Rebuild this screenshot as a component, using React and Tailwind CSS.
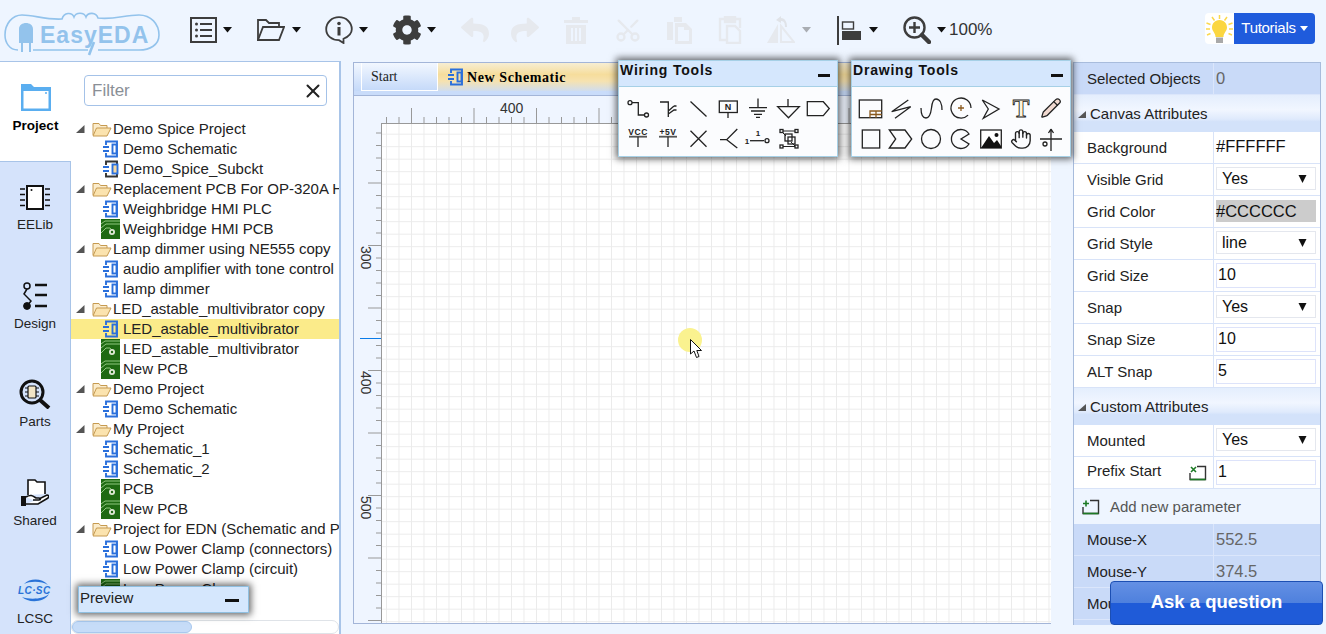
import { Scissors, Pencil, Hand, X } from "lucide-react";
import { FaCog, FaReply, FaShare } from "react-icons/fa";

const Caret = ({ light }) => (
  <svg width="9" height="6" viewBox="0 0 9 6" className="shrink-0">
    <path d="M0 0H9L4.5 5.5Z" fill={light ? "#a9adb3" : "#111"} />
  </svg>
);

const Logo = () => (
  <svg width="157" height="44" viewBox="0 0 157 44" className="shrink-0">
    <path
      d="M14 38C5 38 1 30 1 23C1 12 8 3 18 3C30 3 42 8 58 7C60 0 68 0 70 5C72 0 80 0 82 5C84 0 92 0 94 6C110 8 120 3 135 3C147 3 155 12 155 23C155 33 146 38 135 38H94M29 38H84"
      fill="none"
      stroke="#93c3ec"
      strokeWidth="1.6"
    />
    <path d="M15 31V17C15 9 29 9 29 17V31H27V40H25V31H19V40H17V31Z" fill="#93c3ec" />
    <text x="36" y="31" fontFamily="Liberation Sans" fontWeight="700" fontSize="23" fill="#93c3ec" letterSpacing="1">EasyEDA</text>
    <path d="M90 30L85 43" stroke="#93c3ec" strokeWidth="2.6" />
  </svg>
);

const ListIcon = () => (
  <svg width="27" height="26" viewBox="0 0 27 26">
    <rect x="1" y="1" width="25" height="24" fill="none" stroke="#3d3d3d" strokeWidth="2" />
    <g fill="#3d3d3d">
      <circle cx="6.5" cy="7" r="1.5" /><circle cx="6.5" cy="13" r="1.5" /><circle cx="6.5" cy="19" r="1.5" />
      <rect x="10" y="6" width="12" height="2" /><rect x="10" y="12" width="12" height="2" /><rect x="10" y="18" width="12" height="2" />
    </g>
  </svg>
);

const FolderIcon = () => (
  <svg width="28" height="24" viewBox="0 0 28 24" fill="none" stroke="#3d3d3d" strokeWidth="1.8">
    <path d="M1 22V2H9L12 5H22V9" />
    <path d="M1 22L6 9H27L22 22Z" />
  </svg>
);

const InfoIcon = () => (
  <svg width="28" height="28" viewBox="0 0 28 28" fill="none">
    <path d="M14 1.2C6.8 1.2 1.2 6.6 1.2 13.2C1.2 19.8 6.8 24 14 24.2L18.5 27V22.8C23.5 20.6 26.8 17.6 26.8 13.2C26.8 6.6 21.2 1.2 14 1.2Z" stroke="#3d3d3d" strokeWidth="1.8" />
    <rect x="12.5" y="11" width="3" height="8.5" fill="#3d3d3d" />
    <circle cx="14" cy="7.5" r="1.8" fill="#3d3d3d" />
  </svg>
);

const TrashIcon = () => (
  <svg width="24" height="27" viewBox="0 0 24 27" fill="#e6e9ee">
    <path d="M8 0H16V3H24V6H0V3H8ZM2 8H22V27H2ZM7 11V24H9V11ZM11 11V24H13V11ZM15 11V24H17V11Z" fillRule="evenodd" />
  </svg>
);

const CopyIcon = () => (
  <svg width="27" height="27" viewBox="0 0 27 27" fill="#e6e9ee">
    <path d="M8 0H16V5H8ZM1 5H7V23H1Z" />
    <path d="M9 6H20L26 12V27H9ZM12 10V24H23V13H18V10Z" fillRule="evenodd" />
  </svg>
);

const PasteIcon = () => (
  <svg width="24" height="28" viewBox="0 0 24 28" fill="none" stroke="#e6e9ee" strokeWidth="2.4">
    <path d="M6 3H2V24H8M18 3H22V12" />
    <rect x="7" y="1" width="10" height="5" fill="#e6e9ee" />
    <path d="M9 10H17L22 15V27H9Z" />
  </svg>
);

const FlipIcon = () => (
  <svg width="28" height="28" viewBox="0 0 28 28">
    <path d="M0 27L11 8V27Z" fill="#e6e9ee" />
    <path d="M14 10L27 26H14Z" fill="none" stroke="#e6e9ee" strokeWidth="2" />
    <path d="M14 0L9 4L14 7V5C17 5 18 7 18 11H20C20 6 18 2 14 2Z" fill="#e0e3e8" />
  </svg>
);

const AlignIcon = () => (
  <svg width="24" height="29" viewBox="0 0 24 29">
    <rect x="0" y="0" width="2" height="29" fill="#3d3d3d" />
    <rect x="5.5" y="6" width="11" height="7" fill="none" stroke="#3d3d3d" strokeWidth="1.4" />
    <rect x="5" y="15" width="19" height="9" fill="#3d3d3d" />
  </svg>
);

const ZoomIcon = () => (
  <svg width="28" height="28" viewBox="0 0 28 28" fill="none" stroke="#3d3d3d">
    <circle cx="11.5" cy="11.5" r="10" strokeWidth="2.4" />
    <path d="M11.5 6V17M6 11.5H17" strokeWidth="2.4" />
    <path d="M19 19L26 26" strokeWidth="4.5" strokeLinecap="round" />
  </svg>
);

const BulbIcon = () => (
  <svg width="27" height="28" viewBox="0 0 27 28">
    <g stroke="#fbd84e" strokeWidth="1.5">
      <path d="M13.5 0V4M6 2L8.5 5.5M21 2L18.5 5.5M0.5 8L4.5 9.5M26.5 8L22.5 9.5M0 14H4M27 14H23M1 20L4.5 18.5M26 20L22.5 18.5" />
    </g>
    <path d="M13.5 5C8.5 5 6 9 6 12.5C6 16 9.5 18 9.5 22H17.5C17.5 18 21 16 21 12.5C21 9 18.5 5 13.5 5Z" fill="#fbd640" />
    <rect x="10" y="22.5" width="7" height="5.5" fill="#a9a9a9" />
  </svg>
);

const Toolbar = () => (
  <div className="h-[60px] flex items-center pl-[4px] shrink-0">
    <div className="mt-[7px]"><Logo /></div>
    <div className="ml-[29px]"><ListIcon /></div>
    <div className="ml-[6px]"><Caret /></div>
    <div className="ml-[25px]"><FolderIcon /></div>
    <div className="ml-[7px]"><Caret /></div>
    <div className="ml-[24px]"><InfoIcon /></div>
    <div className="ml-[6px]"><Caret /></div>
    <div className="ml-[24px]"><FaCog size={30} color="#3d3d3d" /></div>
    <div className="ml-[5px]"><Caret /></div>
    <div className="ml-[25px]"><FaReply size={28} color="#e6e9ee" /></div>
    <div className="ml-[22px]"><FaShare size={28} color="#e6e9ee" /></div>
    <div className="ml-[25px]"><TrashIcon /></div>
    <div className="ml-[26px]"><Scissors size={28} color="#e6e9ee" strokeWidth={2} className="-rotate-90" /></div>
    <div className="ml-[24px]"><CopyIcon /></div>
    <div className="ml-[25px]"><PasteIcon /></div>
    <div className="ml-[25px]"><FlipIcon /></div>
    <div className="ml-[7px]"><Caret light /></div>
    <div className="ml-[26px]"><AlignIcon /></div>
    <div className="ml-[8px]"><Caret /></div>
    <div className="ml-[25px]"><ZoomIcon /></div>
    <div className="ml-[6px]"><Caret /></div>
    <span className="ml-[3px] text-[17px] text-[#333]">100%</span>
    <div className="ml-auto mr-[11px] flex h-[31px] -mt-[3px]">
      <div className="w-[29px] bg-white rounded-l flex items-center justify-center"><BulbIcon /></div>
      <div className="w-[81px] bg-[#1f5bdc] rounded-r text-white text-[15px] flex items-center justify-center gap-[4px]">
        <span className="tracking-[-0.3px]">Tutorials</span>
        <svg width="8" height="5" viewBox="0 0 8 5"><path d="M0 0H8L4 5Z" fill="#fff" /></svg>
      </div>
    </div>
  </div>
);

const FolderNav = () => (
  <svg width="30" height="27" viewBox="0 0 30 27">
    <path d="M0 27V0H10L13 3H30V27Z" fill="#5aaef0" />
    <rect x="2.5" y="7" width="25" height="17.5" fill="#fff" />
    <circle cx="25" cy="9" r="1" fill="#5aaef0" />
  </svg>
);

const ChipNav = () => (
  <svg width="30" height="25" viewBox="0 0 30 25">
    <rect x="7" y="1" width="16" height="23" fill="#fff" stroke="#111" strokeWidth="2" />
    <circle cx="11.5" cy="5" r="1" fill="#111" />
    <path d="M0 4H5M0 9.5H5M0 15H5M0 20.5H5M25 4H30M25 9.5H30M25 15H30M25 20.5H30" stroke="#111" strokeWidth="1.6" />
  </svg>
);

const DesignNav = () => (
  <svg width="26" height="28" viewBox="0 0 26 28" fill="none" stroke="#111">
    <circle cx="5" cy="4" r="3" strokeWidth="1.5" />
    <path d="M5 7L2 12L9 19L5 24" strokeWidth="1.5" />
    <circle cx="5" cy="24" r="3.4" fill="#111" />
    <path d="M13 3H25M13 13H25M13 24H25" strokeWidth="2.6" />
  </svg>
);

const PartsNav = () => (
  <svg width="32" height="30" viewBox="0 0 32 30" fill="none" stroke="#111">
    <circle cx="13" cy="13" r="11" strokeWidth="3" />
    <rect x="9" y="7" width="8" height="12" rx="1" strokeWidth="1.2" fill="#f1e4c5" />
    <path d="M6 9H9M6 13H9M6 17H9M17 9H20M17 13H20M17 17H20" strokeWidth="1" />
    <path d="M21 21L30 29" strokeWidth="4" />
  </svg>
);

const SharedNav = () => (
  <svg width="28" height="28" viewBox="0 0 28 28">
    <path d="M7 16V1H14L16 3H24V15" fill="#fff" stroke="#111" strokeWidth="1.6" />
    <path d="M0 17H5V27H0Z" fill="#111" />
    <path d="M5 18C10 15 12 17 15 19H18C20 19 20 21 18 21H12M18 20L26 16C28 16 28 18 27 19L17 25H5" fill="#fff" stroke="#111" strokeWidth="1.6" />
  </svg>
);

const LcscNav = () => (
  <svg width="34" height="24" viewBox="0 0 34 24">
    <ellipse cx="17" cy="12" rx="15" ry="11.5" fill="#cfe3fa" />
    <path d="M4 18C10 24 26 24 31 15C26 20 12 21 4 18Z" fill="#2a73d8" />
    <path d="M6 5C12 -1 24 -1 30 6C24 2 12 2 6 5Z" fill="#2a73d8" />
    <text x="0" y="15" fontFamily="Liberation Sans" fontWeight="700" fontStyle="italic" fontSize="10" fill="#2a73d8" letterSpacing="0.4">LC·SC</text>
  </svg>
);

const navItems = [
  { label: "EELib", icon: <ChipNav /> },
  { label: "Design", icon: <DesignNav /> },
  { label: "Parts", icon: <PartsNav /> },
  { label: "Shared", icon: <SharedNav /> },
  { label: "LCSC", icon: <LcscNav /> },
];

const NavRail = () => (
  <div className="w-[71px] shrink-0 flex flex-col">
    <div className="h-[99px] shrink-0 bg-white flex flex-col items-center pt-[22px]">
      <FolderNav />
      <span className="mt-[6px] text-[13.5px] leading-[18px] font-bold text-black">Project</span>
    </div>
    <div className="flex-1 min-h-0 overflow-hidden bg-[#d5e3fb] border-r border-[#a8c4e8] border-t">
      {navItems.map((item) => (
        <div key={item.label} className="h-[98.6px] flex flex-col items-center">
          <div className="h-[30px] shrink-0 mt-[20px] flex items-center justify-center">{item.icon}</div>
          <span className="mt-[4px] text-[13.5px] leading-[18px] text-[#222]">{item.label}</span>
        </div>
      ))}
    </div>
  </div>
);

const SchIcon = ({ spice }) => (
  <svg width="18" height="18" viewBox="0 0 18 18" fill="none" stroke={spice ? "#333" : "#2a6fdb"} strokeWidth="1.9" className="shrink-0">
    <path d="M4 5V1.5H15V16.5H4V13" />
    <path d="M1 7H7M1 11H7" stroke="#2a6fdb" />
    <rect x="10.5" y="4.5" width={spice ? 5 : 4} height="9" stroke="#2a6fdb" fill={spice ? "#f6d9a2" : "none"} />
  </svg>
);

const PcbIcon = () => (
  <svg width="19" height="20" viewBox="0 0 19 20" className="shrink-0">
    <rect width="19" height="20" fill="#1e6a12" />
    <path d="M0 5L4 2H19M0 9L5 5H19M0 14L5 9H9L12 12" fill="none" stroke="#8ec77f" strokeWidth="1" />
    <circle cx="11" cy="13" r="3" fill="#dfe9d6" />
    <circle cx="11" cy="13" r="1.2" fill="#1e6a12" />
  </svg>
);

const OpenFolder = () => (
  <svg width="20" height="16" viewBox="0 0 20 16" className="shrink-0">
    <path d="M1 14V2.5H7L8.5 4.5H15V7" fill="#fbeccb" stroke="#c69a50" />
    <path d="M1 15L4.5 7H19L15 15Z" fill="#fbe3ae" stroke="#c69a50" />
  </svg>
);

const treeRows = [
  ["p", "Demo Spice Project"], ["s", "Demo Schematic"], ["x", "Demo_Spice_Subckt"],
  ["p", "Replacement PCB For OP-320A HMI"], ["s", "Weighbridge HMI PLC"], ["c", "Weighbridge HMI PCB"],
  ["p", "Lamp dimmer using NE555 copy"], ["s", "audio amplifier with tone control"], ["s", "lamp dimmer"],
  ["p", "LED_astable_multivibrator copy"], ["a", "LED_astable_multivibrator"], ["c", "LED_astable_multivibrator"], ["c", "New PCB"],
  ["p", "Demo Project"], ["s", "Demo Schematic"],
  ["p", "My Project"], ["s", "Schematic_1"], ["s", "Schematic_2"], ["c", "PCB"], ["c", "New PCB"],
  ["p", "Project for EDN (Schematic and PCB)"], ["s", "Low Power Clamp (connectors)"], ["s", "Low Power Clamp (circuit)"], ["c", "Low Power Clamp"],
];

const TreeRow = ({ kind, label }) => {
  if (kind === "p") {
    return (
      <div className="h-5 flex items-center pl-[5px] whitespace-nowrap">
        <svg width="9" height="8" viewBox="0 0 9 8" className="shrink-0"><path d="M8.5 0V8H0Z" fill="#555" /></svg>
        <div className="ml-[7px]"><OpenFolder /></div>
        <span className="ml-[1px] text-[15px] text-[#222]">{label}</span>
      </div>
    );
  }
  return (
    <div className={`h-5 flex items-center pl-[31px] whitespace-nowrap ${kind === "a" ? "bg-[#fbeb8a]" : ""}`}>
      {kind === "c" ? <div className="-ml-[1px]"><PcbIcon /></div> : <SchIcon spice={kind === "x"} />}
      <span className="ml-[3px] text-[15px] text-[#222]">{label}</span>
    </div>
  );
};

const ProjectTree = () => (
  <div className="flex-1 min-w-0 bg-white border-r-2 border-[#a8c4e8] flex flex-col">
    <div className="ml-[13px] mt-[13px] w-[243px] h-[31px] shrink-0 border border-[#a4c2e8] rounded flex items-center justify-between pl-[7px] pr-[2px]">
      <span className="text-[17px] text-[#8a8f96]">Filter</span>
      <X size={22} strokeWidth={2.2} color="#222" />
    </div>
    <div className="mt-[13px] flex-1 min-h-0 overflow-hidden">
      {treeRows.map(([kind, label], i) => (
        <TreeRow key={i} kind={kind} label={label} />
      ))}
    </div>
    <div className="h-[14px] shrink-0 border border-[#dfe3e8] rounded-full">
      <div className="h-full w-[120px] bg-[#c6dcf8] border border-[#a8c8ee] rounded-full" />
    </div>
  </div>
);

const TopRuler = () => (
  <svg width="670" height="27" className="block">
    {Array.from({ length: 54 }, (_, i) => {
      const x = 5.5 + i * 12.5;
      const major = (i + 3) % 5 === 0;
      return <line key={i} x1={x} x2={x} y1={major ? 12 : 21} y2="27" stroke="#999" strokeWidth="1" />;
    })}
    <text x="119" y="17" fontFamily="Liberation Sans" fontSize="14" fill="#333">400</text>
  </svg>
);

const LeftRuler = () => (
  <svg width="28" height="499" className="block">
    {Array.from({ length: 41 }, (_, i) => {
      const y = 10 + i * 12.5;
      const major = (i + 1) % 5 === 0;
      return <line key={i} x1={major ? 14 : 22} x2="28" y1={y} y2={y} stroke="#999" strokeWidth="1" />;
    })}
    <line x1="6" x2="28" y1="215.5" y2="215.5" stroke="#0a7be8" />
    {[["300", 123], ["400", 248], ["500", 373]].map(([label, y]) => (
      <text key={label} transform={`translate(7 ${y}) rotate(90)`} fontFamily="Liberation Sans" fontSize="14" fill="#333">{label}</text>
    ))}
  </svg>
);

const Canvas = () => (
  <div className="ml-[12px] mt-[2px] w-[698px] h-[562px] shrink-0 border border-[#a3b5d8] flex flex-col">
    <div className="h-[28px] shrink-0 flex bg-[linear-gradient(#f2f7ff,#c4d9f9)]">
      <div className="w-[8px] border-r border-white" />
      <div className="w-[76px] border-r border-b border-white pl-[9px] pt-[3px] font-['Liberation_Serif',serif] text-[14px] text-[#222]">Start</div>
      <div className="flex-1 flex items-center pl-[9px] h-[33px] bg-[linear-gradient(#f7eed3_0%,#f6dd9c_35%,#f6e2b0_55%,#c9dcfa_90%)]">
        <div className="-mt-[5px] flex items-center">
          <SchIcon />
          <span className="ml-[2px] font-['Liberation_Serif',serif] font-bold text-[14px] tracking-[0.6px] text-black">New Schematic</span>
        </div>
      </div>
    </div>
    <div className="h-[5px] shrink-0 bg-[#c9dcfa] border-b border-[#a3b5d8]" />
    <div className="flex-1 min-h-0 grid grid-cols-[27px_1fr] grid-rows-[27px_1fr] bg-[#eff5ff]">
      <div />
      <TopRuler />
      <LeftRuler />
      <div className="bg-white border-l border-t border-[#999] bg-[linear-gradient(to_right,#ebebeb_1px,transparent_1px),linear-gradient(to_bottom,#ebebeb_1px,transparent_1px)] bg-[size:12.5px_12.5px] bg-[position:4px_9.7px]" />
    </div>
  </div>
);

const Label = ({ children, className = "" }) => (
  <span className={`text-[15px] text-[#222] ${className}`}>{children}</span>
);

const AttrRow = ({ label, children, extra, labelClass = "mt-[1px]" }) => (
  <div className="h-[32px] flex bg-white border-b border-[#d8e3f8]">
    <div className="w-[140px] shrink-0 flex items-center justify-between pl-[13px] pr-[6px] border-r border-[#d8e3f8]">
      <Label className={labelClass}>{label}</Label>
      {extra}
    </div>
    <div className="flex-1 flex items-center pl-[2px] pr-[4px]">{children}</div>
  </div>
);

const SelectBox = ({ value }) => (
  <div className="w-full h-[23px] -mt-[2px] border border-[#e4e7ee] flex items-center justify-between pl-[5px] pr-[8px] text-[16px] text-[#111]">
    {value}
    <svg width="9" height="8" viewBox="0 0 9 8"><path d="M0.5 0H8.5L4.5 8Z" fill="#111" /></svg>
  </div>
);

const InputBox = ({ value }) => (
  <div className="w-full h-[25px] border border-[#dde3fa] flex items-center pl-[1px] pb-[1px] text-[16px] text-[#111]">{value}</div>
);

const SectionHeader = ({ title }) => (
  <div className="h-[37px] flex items-center pl-[4px] pt-[1px] bg-[linear-gradient(#e4eefd_0%,#f1f6ff_40%,#dfeafc_65%,#d3e2fa_72%,#d3e2fa_100%)]">
    <svg width="8" height="7" viewBox="0 0 8 7"><path d="M8 0V7H0Z" fill="#555" /></svg>
    <Label className="ml-[4px]">{title}</Label>
  </div>
);

const InfoRow = ({ label, value }) => (
  <div className="h-[32px] flex bg-[#c9daf8] border-b border-[#dbe6fb]">
    <div className="w-[140px] shrink-0 flex items-center pl-[13px] border-r border-[#dbe6fb]">
      <Label className="mt-[1px]">{label}</Label>
    </div>
    <div className="pl-[2px] pt-[3px] text-[16.5px] text-[#666]">{value}</div>
  </div>
);

const AddIcon = ({ cross }) => (
  <svg width="18" height="16" viewBox="0 0 18 16" fill="none" className="shrink-0">
    <path d="M8 1.5H16.5V14.5H1V8" stroke="#333" strokeWidth="1.4" />
    <path d="M1 14.5H16.5" stroke="#1c7a24" strokeWidth="1.6" />
    <path d={cross ? "M2 2L7 7M7 2L2 7" : "M1 4.5H7M4 1.5V7.5"} stroke="#1c7a24" strokeWidth="1.6" />
  </svg>
);

const AttributesPanel = () => (
  <div className="ml-[22px] mt-[2px] w-[248px] h-[563px] shrink-0 border-l border-r border-t border-[#a8bcdc] overflow-hidden">
    <InfoRow label="Selected Objects" value="0" />
    <SectionHeader title="Canvas Attributes" />
    <AttrRow label="Background"><span className="-mt-[2px] text-[16.5px] text-[#111]">#FFFFFF</span></AttrRow>
    <AttrRow label="Visible Grid"><SelectBox value="Yes" /></AttrRow>
    <AttrRow label="Grid Color">
      <div className="w-full h-[22px] -mt-px bg-[#cccccc] flex items-center text-[16.5px] text-[#111]">#CCCCCC</div>
    </AttrRow>
    <AttrRow label="Grid Style"><SelectBox value="line" /></AttrRow>
    <AttrRow label="Grid Size"><InputBox value="10" /></AttrRow>
    <AttrRow label="Snap"><SelectBox value="Yes" /></AttrRow>
    <AttrRow label="Snap Size"><InputBox value="10" /></AttrRow>
    <AttrRow label="ALT Snap"><InputBox value="5" /></AttrRow>
    <SectionHeader title="Custom Attributes" />
    <AttrRow label="Mounted"><SelectBox value="Yes" /></AttrRow>
    <AttrRow label="Prefix Start" labelClass="-mt-[3px]" extra={<AddIcon cross />}><InputBox value="1" /></AttrRow>
    <div className="h-[35px] flex items-center pl-[8px] pt-[1px] bg-[#eef5ff]">
      <AddIcon />
      <span className="ml-[10px] text-[15px] text-[#555]">Add new parameter</span>
    </div>
    <InfoRow label="Mouse-X" value="552.5" />
    <InfoRow label="Mouse-Y" value="374.5" />
    <InfoRow label="Mouse-DX" value="0" />
    <div className="h-[32px] bg-[#c9daf8]" />
  </div>
);

const ToolPanelShell = ({ title, className, children }) => (
  <div className={`absolute border border-[#a6d0e6] bg-[#fbfcfe] shadow-[0_0_7px_2px_rgba(0,0,0,0.6)] ${className}`}>
    <div className="h-[26px] bg-[#d5e7fd] border-b border-[#a6d0e6] flex justify-between pl-[1px] pr-[7px]">
      <span className="text-[14px] font-bold tracking-[0.8px] text-[#111] leading-[18px]">{title}</span>
      <div className="w-[12px] h-[2.5px] bg-[#111] mt-[13px]" />
    </div>
    <div className="grid grid-cols-[repeat(7,30px)] grid-rows-[31px_31px] pl-[4px] pt-[6px]">{children}</div>
  </div>
);

const Tool = ({ children, color = "#222" }) => (
  <svg width="30" height="30" viewBox="0 0 30 30" fill="none" stroke={color} strokeWidth="1.3">{children}</svg>
);

const SmallText = ({ x, y, children, size = 8.5, spacing = 0 }) => (
  <text x={x} y={y} textAnchor="middle" fontFamily="Liberation Sans" fontWeight={700} fontSize={size} letterSpacing={spacing} fill="#222" stroke="none">{children}</text>
);

const WiringTools = () => (
  <ToolPanelShell title="Wiring Tools" className="left-[618px] top-[60px] w-[220px] h-[97px]">
    <Tool><circle cx="7" cy="9.7" r="2" /><path d="M9 9.7H15.3V22H21.5" /><circle cx="23.5" cy="22" r="2" /></Tool>
    <Tool><path d="M7 9H15.3V24M15.3 18L21 13M15.3 21L21 17H23.5M21 13H23.5" /></Tool>
    <Tool><path d="M7.5 8.5L23.5 23.5" /></Tool>
    <Tool><rect x="6.3" y="8" width="18" height="11.5" /><path d="M15 19.5V25" /><SmallText x="15" y="17" size="9">N</SmallText></Tool>
    <Tool><path d="M15 5.5V14.7M6 14.7H24M8 18H22M11 21.3H19M13 24.3H17" /></Tool>
    <Tool><path d="M15 6V13.7M4.7 13.7H26.3L15.5 24.7Z" /></Tool>
    <Tool><path d="M4.3 8.7H20.3L26.3 15.5L20.3 22.7H4.3Z" /></Tool>
    <Tool><SmallText x="15" y="10.5" spacing={0.6}>VCC</SmallText><path d="M6 12.7H24" strokeWidth="1.8" stroke="#555" /><path d="M15 12.7V23" /></Tool>
    <Tool><SmallText x="15" y="10.5" spacing={0.6}>+5V</SmallText><path d="M6 12.7H24" strokeWidth="1.8" stroke="#555" /><path d="M15 12.7V23" /></Tool>
    <Tool><path d="M7.5 6.7L23.5 22.7M23.5 6.7L7.5 22.7" /></Tool>
    <Tool><path d="M7 15.7H13.7L24.3 5M13.7 15.7L24.3 24" /></Tool>
    <Tool><SmallText x="4" y="20" size="8">1</SmallText><SmallText x="15" y="12" size="8">1</SmallText><path d="M7 16.7H21" /><circle cx="24" cy="16.7" r="2" /></Tool>
    <Tool>
      <rect x="7" y="5.5" width="3" height="3" /><rect x="22" y="5.5" width="3" height="3" /><rect x="7" y="21" width="3" height="3" /><rect x="22" y="21" width="3" height="3" />
      <path d="M9 8L13 12M22 22L18 18M10 7H22M10 22.5H22" strokeWidth="1" />
      <rect x="12" y="10" width="7" height="7" /><rect x="15" y="13" width="7" height="7" />
    </Tool>
  </ToolPanelShell>
);

const DrawingTools = () => (
  <ToolPanelShell title="Drawing Tools" className="left-[851px] top-[60px] w-[220px] h-[97px]">
    <Tool><rect x="3.3" y="7" width="22.4" height="17.7" /><path d="M14 24.7V18H25.7M14 21.5H25.7M20 18V24.7" stroke="#8a5a1f" /></Tool>
    <Tool><path d="M22.3 7L5.7 18.7L24.7 13.7L9 25.3" /></Tool>
    <Tool><path d="M5 15C5 22 7 25 10 25C14 25 15 19 15.5 15C16 10 17 6 20 6C24 6 26 11 26 17" /></Tool>
    <Tool><path d="M22.1 22.1A10 10 0 1 1 25 15" /><path d="M15 12V18M12 15H18" stroke="#8a5a1f" /></Tool>
    <Tool><path d="M6.3 7L23 16L7.3 25.3L12.3 16Z" /></Tool>
    <svg width="30" height="30" viewBox="0 0 30 30"><text x="15" y="24" textAnchor="middle" fontFamily="Liberation Serif" fontWeight="700" fontSize="25" fill="#fff4dc" stroke="#222" strokeWidth="0.8">T</text></svg>
    <div className="w-[30px] h-[30px] flex items-center justify-center"><Pencil size={22} strokeWidth={1.4} color="#222" fill="#f1d9d0" /></div>
    <Tool><rect x="6.3" y="6" width="17.4" height="18" /></Tool>
    <Tool><path d="M3.3 6H19L25.7 15L19 24H3.3L9.7 15Z" /></Tool>
    <Tool><circle cx="15" cy="15" r="9.5" /></Tool>
    <Tool><path d="M23 10A9.5 9.5 0 1 0 23 20L15 15Z" /></Tool>
    <svg width="30" height="30" viewBox="0 0 30 30">
      <rect x="4.7" y="6" width="20.6" height="18" fill="#fff" stroke="#222" strokeWidth="1.3" />
      <path d="M5 24L13 12L18 19L21 16L25 22V24Z" fill="#111" />
      <circle cx="20.5" cy="11" r="2" fill="#111" />
    </svg>
    <div className="w-[30px] h-[30px] flex items-center justify-center"><Hand size={22} strokeWidth={1.5} color="#222" /></div>
    <Tool>
      <path d="M4 15H26M15 5V27M15 5L12.5 9M15 5L17.5 9" />
      <circle cx="9" cy="20" r="2" />
    </Tool>
  </ToolPanelShell>
);

const PreviewPanel = () => (
  <div className="absolute left-[78px] top-[586px] w-[171px] h-[27px] bg-[#d5e7fd] border border-[#8fbfe0] shadow-[0_0_7px_2px_rgba(0,0,0,0.6)] flex justify-between pl-[1px] pr-[9px]">
    <span className="text-[15px] leading-[21px] text-[#222]">Preview</span>
    <div className="w-[14px] h-[3px] bg-[#111] mt-[12px]" />
  </div>
);

const MouseCursor = () => (
  <div className="absolute left-[678px] top-[328px] w-[24px] h-[24px] rounded-full bg-[#faf28f]">
    <svg width="14" height="20" viewBox="0 0 14 20" className="absolute left-[12px] top-[11px]">
      <path d="M0.5 0.5V15L4 12L6.5 18.5L9 17.5L6.8 11.5H11.5Z" fill="#fff" stroke="#111" strokeWidth="1" />
    </svg>
  </div>
);

const AskButton = () => (
  <div className="absolute left-[1110px] top-[581px] w-[213px] h-[44px] pb-[3px] rounded border border-[#1c4fb3] bg-[linear-gradient(#6490e4_0%,#4e80dd_50%,#1f5bd8_50%,#1f5bd8_100%)] flex items-center justify-center text-[18.5px] font-bold text-white">
    Ask a question
  </div>
);

export default function App() {
  return (
    <div className="relative w-[1326px] h-[634px] overflow-hidden bg-[#eef5ff] flex flex-col font-['Liberation_Sans',sans-serif]">
      <Toolbar />
      <div className="flex-1 min-h-0 flex">
        <div className="w-[341px] shrink-0 flex border-t border-[#a8c4e8] mt-px">
          <NavRail />
          <ProjectTree />
        </div>
        <Canvas />
        <AttributesPanel />
      </div>
      <WiringTools />
      <DrawingTools />
      <PreviewPanel />
      <MouseCursor />
      <AskButton />
    </div>
  );
}
